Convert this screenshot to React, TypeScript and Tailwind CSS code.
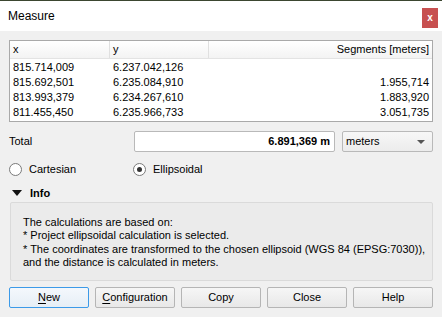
import React from "react";

const rows = [
  { x: "815.714,009", y: "6.237.042,126", s: "" },
  { x: "815.692,501", y: "6.235.084,910", s: "1.955,714" },
  { x: "813.993,379", y: "6.234.267,610", s: "1.883,920" },
  { x: "811.455,450", y: "6.235.966,733", s: "3.051,735" },
];

function Radio({ checked, label }: { checked?: boolean; label: string }) {
  return (
    <div className="flex items-center gap-[7px]">
      <span className="flex h-[13px] w-[13px] items-center justify-center rounded-full border border-[#7a7a7a] bg-white">
        {checked ? <span className="h-[5px] w-[5px] rounded-full bg-[#333]" /> : null}
      </span>
      <span>{label}</span>
    </div>
  );
}

function Btn({ children, active }: { children: React.ReactNode; active?: boolean }) {
  return (
    <button
      type="button"
      className={
        active
          ? "h-[21px] w-[80px] rounded-[2px] border border-[#3c9ae8] bg-gradient-to-b from-[#f4f8fc] to-[#e6eef6] text-[11px] leading-none text-black"
          : "h-[21px] w-[80px] rounded-[2px] border border-[#b5b5b5] bg-gradient-to-b from-[#f6f6f6] to-[#e8e8e8] text-[11px] leading-none text-black"
      }
    >
      {children}
    </button>
  );
}

export default function App() {
  return (
    <div className="flex h-[317px] w-[442px] flex-col overflow-hidden bg-[#f0f0f0] font-['Liberation_Sans',Arial,sans-serif] text-[11px] text-black">
      <div className="h-px shrink-0 bg-[#3b4630]" />
      <div className="flex h-[30px] shrink-0 items-start justify-between bg-white">
        <span className="ml-[8px] mt-[8px] text-[12px] leading-[14px]">Measure</span>
        <span className="mr-[4px] mt-[7px] flex h-[20px] w-[16px] items-center justify-center bg-[#c75050] text-[10px] font-bold leading-none text-white">
          x
        </span>
      </div>

      <div className="flex flex-1 flex-col px-[9px]">
        {/* coordinates table */}
        <div className="mt-[9px] h-[82px] border border-[#a9a9a9] bg-white">
          <div className="flex h-[18px] border-b border-[#e3e3e3] bg-gradient-to-b from-white to-[#f3f3f3]">
            <div className="flex w-[100px] items-center border-r border-[#e0e0e0] pl-[3px]">x</div>
            <div className="flex w-[99px] items-center border-r border-[#e0e0e0] pl-[3px]">y</div>
            <div className="flex flex-1 items-center justify-end pr-[3px]">Segments [meters]</div>
          </div>
          <div className="pt-[1px]">
            {rows.map((r) => (
              <div key={r.x} className="flex h-[15px] items-center">
                <div className="w-[100px] pl-[3px]">{r.x}</div>
                <div className="w-[99px] pl-[3px]">{r.y}</div>
                <div className="flex-1 pr-[3px] text-right">{r.s}</div>
              </div>
            ))}
          </div>
        </div>

        {/* total */}
        <div className="mt-[9px] flex h-[21px] items-center">
          <span className="w-[125px]">Total</span>
          <div className="flex h-[21px] w-[201px] items-center justify-end rounded-[2px] border border-[#b9b9b9] bg-white pr-[4px] font-bold">
            6.891,369 m
          </div>
          <div className="ml-[7px] flex h-[21px] flex-1 items-center justify-between rounded-[2px] border border-[#b9b9b9] bg-gradient-to-b from-[#f7f7f7] to-[#ececec] pl-[3px] pr-[7px]">
            <span>meters</span>
            <svg width="8" height="4" viewBox="0 0 8 4">
              <path d="M0 0h8L4 4z" fill="#555" />
            </svg>
          </div>
        </div>

        {/* calc type */}
        <div className="mt-[10px] flex h-[15px] items-center">
          <div className="w-[124px]">
            <Radio label="Cartesian" />
          </div>
          <Radio checked label="Ellipsoidal" />
        </div>

        {/* info header */}
        <div className="mt-[9px] flex h-[14px] items-center gap-[8px] pl-[3px]">
          <svg width="10" height="6" viewBox="0 0 10 6">
            <path d="M0 0h10L5 6z" fill="#111" />
          </svg>
          <span className="font-bold">Info</span>
        </div>

        <div className="mt-[2px] ml-px h-[79px] rounded-[2px] border border-[#dadada] bg-[#ebebeb] pl-[12px] pt-[13px] leading-[13.4px]">
          <div>The calculations are based on:</div>
          <div>* Project ellipsoidal calculation is selected.</div>
          <div>* The coordinates are transformed to the chosen ellipsoid (WGS 84 (EPSG:7030)),</div>
          <div>and the distance is calculated in meters.</div>
        </div>

        <div className="mt-[6px] flex gap-[6px]">
          <Btn active>
            <span className="underline underline-offset-2">N</span>ew
          </Btn>
          <Btn>
            <span className="underline underline-offset-2">C</span>onfiguration
          </Btn>
          <Btn>Copy</Btn>
          <Btn>Close</Btn>
          <Btn>Help</Btn>
        </div>
      </div>
    </div>
  );
}
